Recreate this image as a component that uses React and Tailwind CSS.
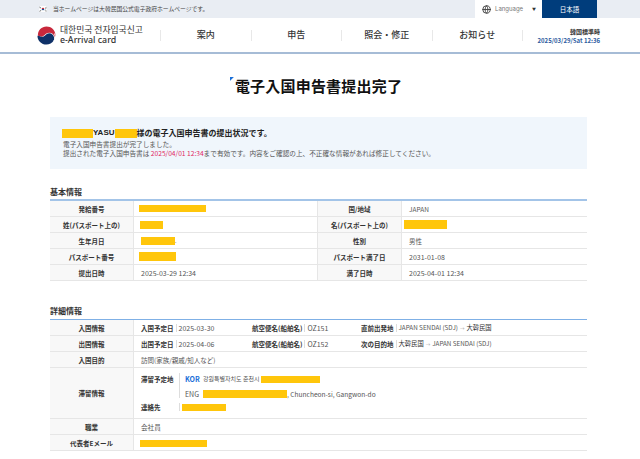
import React from "react";
import { Globe } from "lucide-react";

const Mask = ({ className }) => <span className={`inline-block bg-[#ffc60b] ${className}`} />;

const navItems = ["案内", "申告", "照会・修正", "お知らせ"];

const small = (text) => <span className="text-[6.5px]">{text}</span>;

const basicRows = [
  ["発給番号", <Mask className="w-[67px] h-[7px] -ml-[2px]" />, "国/地域", small("JAPAN")],
  ["姓(パスポート上の)", <Mask className="w-[23px] h-[8px] -ml-[1px] mt-[1px]" />, "名(パスポート上の)", <Mask className="w-[43px] h-[9px] -ml-[5px]" />],
  ["生年月日", <><Mask className="w-[34px] h-[8px]" /><span className="self-end pb-[2px] text-[5px]">.</span></>, "性別", small("男性")],
  ["パスポート番号", <Mask className="w-[37px] h-[9px] -ml-[2px]" />, "パスポート満了日", "2031-01-08"],
  ["提出日時", "2025-03-29 12:34", "満了日時", "2025-04-01 12:34"],
];

const Label = ({ children, className = "" }) => (
  <div className={`flex items-center justify-center bg-[#f8f8f8] border-r border-[#e6e6e6] font-bold text-[6.5px] text-[#333] whitespace-nowrap ${className}`}>
    {children}
  </div>
);

const Pair = ({ label, value, width }) => (
  <div className="flex items-center" style={{ width }}>
    <span className="font-bold text-[6.5px] text-[#333] whitespace-nowrap">{label}</span>
    <span className="mx-[2px] h-[8px] border-l border-[#ddd]" />
    <span className="whitespace-nowrap text-[#555]">{value}</span>
  </div>
);

const Arrow = () => <span className="mx-[2px] text-[4.5px] text-[#999]">→</span>;

const Logo = () => (
  <svg width="19" height="19" viewBox="0 0 40 40">
    <circle cx="20" cy="20" r="20" fill="#fff" />
    <path d="M2 21C1 9 10 1 20 1c10 0 18 7 19 18 0 2-1 4-2 5-1-6-5-10-11-10-5 0-8 3-10 5-3 3-6 4-9 3-2-1-4-2-6-1z" fill="#c8283c" />
    <path d="M1 21c2-1 4 0 6 1 3 1 7 1 10-2 2-3 5-5 9-5 5 0 9 4 10 9 1 3 0 6-1 7-3 5-9 8-15 8C9 39 1 31 1 21z" fill="#0f3168" />
    <path d="M37 16c2 6 1 12-2 16" stroke="#fff" strokeWidth="2" fill="none" />
  </svg>
);

const Flag = () => (
  <svg width="8" height="6" viewBox="0 0 18 14">
    <rect width="18" height="14" fill="#fff" />
    <path d="M6 7a3 3 0 0 1 6 0z" fill="#cd2e3a" />
    <path d="M6 7a3 3 0 0 0 6 0z" fill="#0f4c9c" />
    <path d="M1 2l3 2M1 4l2 1M14 5l3-2M15 6l2-1M1 12l3-2M2 13l2-2M14 9l3 2M14 11l2 2" stroke="#222" strokeWidth="1.2" />
  </svg>
);

export default function App() {
  return (
    <div className="w-[640px] h-[459px] overflow-hidden bg-white text-[7px] leading-[10px] text-[#555] font-['Noto_Sans_CJK_JP','Noto_Sans',sans-serif]">
      {/* top notice bar */}
      <div className="h-[18px] bg-[#e9edf3] flex items-center pl-[39px] pr-[43px]">
        <Flag />
        <span className="ml-[6px] text-[5.8px] text-[#444]">当ホームページは大韓民国公式電子政府ホームページです。</span>
        <div className="ml-auto flex h-full">
          <div className="w-[67px] bg-white flex items-center pl-[7px] text-[#777]">
            <Globe size={9} className="text-[#444]" strokeWidth={2.5} />
            <span className="ml-[4px] font-['Inter',sans-serif] text-[6px]">Language</span>
            <span className="ml-[9px] text-[4px] text-[#333]">▼</span>
          </div>
          <div className="w-[55px] bg-[#003d7c] text-white flex items-center justify-center text-[6.5px]">日本語</div>
        </div>
      </div>

      {/* header */}
      <div className="h-[36px] border-b-2 border-[#a6bcd6] flex items-center pl-[37px] pr-[40px]">
        <Logo />
        <div className="ml-[4px] w-[100px] text-[#333]">
          <div className="text-[8.8px] leading-[11px] font-['Noto_Sans_CJK_KR',sans-serif] whitespace-nowrap">대한민국 전자입국신고</div>
          <div className="text-[8.8px] leading-[11px] font-['Noto_Sans',sans-serif] font-medium">e-Arrival card</div>
        </div>
        <div className="flex border-r border-[#e8e8e8] h-[11px]">
          {navItems.map((item) => (
            <div key={item} className="w-[90.5px] border-l border-[#e8e8e8] flex items-center justify-center text-[9px] font-medium text-[#333] whitespace-nowrap">
              {item}
            </div>
          ))}
        </div>
        <div className="ml-auto pt-[1px] text-right text-[6px] leading-[9px] font-bold">
          <div className="text-[#333]">韓国標準時</div>
          <div className="text-[#2b5a9e] whitespace-nowrap">2025/03/29/Sat 12:36</div>
        </div>
      </div>

      {/* title */}
      <div className="h-[63px] flex justify-center pt-[20px] pr-[3px]">
        <h1 className="relative text-[15px] leading-[24px] font-bold text-[#111] tracking-[0.2px]">
          <span className="absolute -left-[5px] top-[3px] w-[4px] h-[4px] bg-[#1a6fd8] [clip-path:polygon(0_0,100%_0,0_100%)]" />
          電子入国申告書提出完了
        </h1>
      </div>

      <div className="ml-[50px] w-[537px]">
        {/* status box */}
        <div className="h-[52px] bg-[#f0f6fc] pl-[13px] pt-[10px]">
          <div className="flex items-center h-[12px] text-[8px] font-bold text-[#222]">
            <Mask className="w-[31px] h-[9px] -ml-[1px]" />
            <span className="font-['Liberation_Sans',sans-serif]">YASU</span>
            <Mask className="w-[22px] h-[9px]" />
            <span className="whitespace-nowrap">様の電子入国申告書の提出状況です。</span>
          </div>
          <div className="mt-[1px] text-[6.65px] leading-[9px] text-[#555]">電子入国申告書提出が完了しました。</div>
          <div className="text-[6.65px] leading-[9px] text-[#555] whitespace-nowrap">
            提出された電子入国申告書は <span className="text-[#e0245e]">2025/04/01 12:34</span>まで有効です。内容をご確認の上、不正確な情報があれば修正してください。
          </div>
        </div>

        {/* basic info */}
        <h2 className="mt-[17px] h-[13px] text-[8px] leading-[12px] font-bold text-[#333]">基本情報</h2>
        <div className="border-t-2 border-[#a3c4e8]">
          {basicRows.map(([l1, v1, l2, v2]) => (
            <div key={l1} className="grid grid-cols-[84px_184px_84px_185px] h-[16px] border-b border-[#e6e6e6]">
              <Label>{l1}</Label>
              <div className="flex items-center pl-[7px] border-r border-[#e6e6e6]">{v1}</div>
              <Label>{l2}</Label>
              <div className="flex items-center pl-[7px]">{v2}</div>
            </div>
          ))}
        </div>

        {/* detail info */}
        <h2 className="mt-[24px] h-[14px] text-[8px] leading-[12px] font-bold text-[#333]">詳細情報</h2>
        <div className="border-t border-[#7fb0e6]">
          <div className="grid grid-cols-[84px_453px] h-[16px] border-b border-[#e6e6e6]">
            <Label>入国情報</Label>
            <div className="flex items-center pl-[7px]">
              <Pair label="入国予定日" value="2025-03-30" width="111px" />
              <Pair label="航空便名(船舶名)" value="OZ151" width="109px" />
              <Pair label="直前出発地" value={<span className="text-[6.3px]">JAPAN SENDAI (SDJ)<Arrow /><span className="text-[#333]">大韓民国</span></span>} />
            </div>
          </div>
          <div className="grid grid-cols-[84px_453px] h-[16px] border-b border-[#e6e6e6]">
            <Label>出国情報</Label>
            <div className="flex items-center pl-[7px]">
              <Pair label="出国予定日" value="2025-04-06" width="111px" />
              <Pair label="航空便名(船舶名)" value="OZ152" width="109px" />
              <Pair label="次の目的地" value={<span className="text-[6.3px]"><span className="text-[#333]">大韓民国</span><Arrow />JAPAN SENDAI (SDJ)</span>} />
            </div>
          </div>
          <div className="grid grid-cols-[84px_453px] h-[16px] border-b border-[#e6e6e6]">
            <Label>入国目的</Label>
            <div className="flex items-center pl-[7px] text-[6.5px]">訪問(家族/親戚/知人など)</div>
          </div>
          <div className="grid grid-cols-[84px_453px] h-[51px] border-b border-[#e6e6e6]">
            <Label>滞留情報</Label>
            <div className="pl-[7px] pt-[5px]">
              <div className="flex">
                <span className="w-[38px] pt-[1px] font-bold text-[6.5px] text-[#333]">滞留予定地</span>
                <div className="border-l border-[#ddd] pl-[5px] h-[25px]">
                  <div className="flex items-center h-[12px]">
                    <span className="w-[18px] font-bold text-[#1a6fd8]">KOR</span>
                    <span className="w-[58px] text-[6px] font-['Noto_Sans_CJK_KR',sans-serif] whitespace-nowrap">강원특별자치도 춘천시</span>
                    <Mask className="w-[59px] h-[7px]" />
                  </div>
                  <div className="flex items-center h-[13px] mt-[2px]">
                    <span className="w-[18px]">ENG</span>
                    <Mask className="w-[84px] h-[8px]" />
                    <span className="whitespace-nowrap text-[6.6px]">, Chuncheon-si, Gangwon-do</span>
                  </div>
                </div>
              </div>
              <div className="flex mt-[4px] items-center">
                <span className="w-[38px] font-bold text-[6.5px] text-[#333]">連絡先</span>
                <div className="border-l border-[#ddd] pl-[2px] h-[8px] flex items-center">
                  <Mask className="w-[44px] h-[7px]" />
                </div>
              </div>
            </div>
          </div>
          <div className="grid grid-cols-[84px_453px] h-[16px] border-b border-[#e6e6e6]">
            <Label>職業</Label>
            <div className="flex items-center pl-[7px] text-[6.6px]">会社員</div>
          </div>
          <div className="grid grid-cols-[84px_453px] h-[16px] border-b border-[#e6e6e6]">
            <Label>代表者Eメール</Label>
            <div className="flex items-center pl-[6px]">
              <Mask className="w-[67px] h-[7px] mt-[2px]" />
            </div>
          </div>
        </div>
      </div>
    </div>
  );
}
